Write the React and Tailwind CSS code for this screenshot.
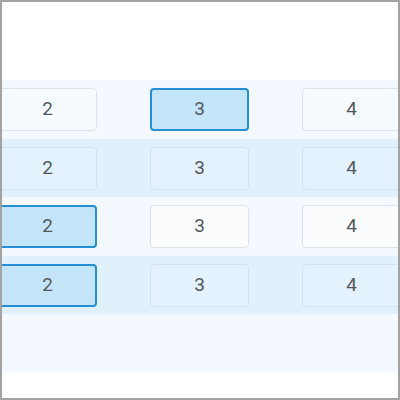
const rows = [
  { bg: "bg-[#f3f9fe]", cell: "bg-[#f5faff] border-[#dce3e9]", sel: 1 },
  { bg: "bg-[#e1f1fc]", cell: "bg-[#e3f2fd] border-[#d3e2ec]", sel: -1 },
  { bg: "bg-[#f3f9fe]", cell: "bg-[#fafcfe] border-[#dce3e9]", sel: 0 },
  { bg: "bg-[#e1f1fc]", cell: "bg-[#e3f2fd] border-[#d3e2ec]", sel: 0 },
];

const values = ["2", "3", "4"];

function Cell({ label, selected, cls }) {
  return (
    <div
      className={`w-[99px] h-[43px] shrink-0 rounded-[4px] flex items-center justify-center text-[19px] text-[#54585c] ${
        selected
          ? "bg-[#c4e4f8] border-2 border-[#268fd3]"
          : `border ${cls}`
      }`}
    >
      {label}
    </div>
  );
}

export default function App() {
  return (
    <div
      className="w-[400px] h-[400px] border-2 border-[#a3a3a3] bg-white overflow-hidden flex flex-col"
      style={{ fontFamily: "Roboto, 'Liberation Sans', sans-serif" }}
    >
      <div className="h-[78px] shrink-0 bg-white" />
      {rows.map((r, i) => (
        <div key={i} className={`h-[58.5px] shrink-0 flex items-start pt-[8px] ${r.bg}`}>
          <div className="flex gap-[53px] ml-[-4px]">
            {values.map((v, j) => (
              <Cell key={j} label={v} selected={r.sel === j} cls={r.cell} />
            ))}
          </div>
        </div>
      ))}
      <div className="h-[59px] shrink-0 bg-[#f3f9fe]" />
      <div className="flex-1 bg-white" />
    </div>
  );
}
